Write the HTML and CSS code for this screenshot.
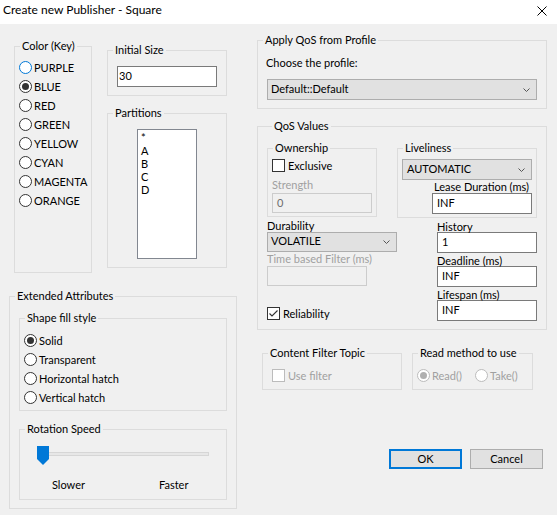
FILE: index.html
```html
<!DOCTYPE html>
<html>
<head>
<meta charset="utf-8">
<title>Create new Publisher - Square</title>
<link rel="stylesheet" href="styles.css">
</head>
<body>
<div class="window">
  <div class="titlebar">
    <span class="title">Create new Publisher - Square</span>
    <svg class="close" width="10" height="10" viewBox="0 0 10 10"><path d="M0.5 0.5 L9.5 9.5 M9.5 0.5 L0.5 9.5" stroke="#000" stroke-width="1" fill="none"/></svg>
  </div>
  <div class="client">
    <div class="col-left">
      <div class="left-top">
        <div class="group color-group">
          <div class="legend">Color (Key)</div>
          <div class="radio-list color-list">
            <div class="radio"><span class="rb focus"></span><span class="rt">PURPLE</span></div>
            <div class="radio"><span class="rb on"></span><span class="rt">BLUE</span></div>
            <div class="radio"><span class="rb"></span><span class="rt">RED</span></div>
            <div class="radio"><span class="rb"></span><span class="rt">GREEN</span></div>
            <div class="radio"><span class="rb"></span><span class="rt">YELLOW</span></div>
            <div class="radio"><span class="rb"></span><span class="rt">CYAN</span></div>
            <div class="radio"><span class="rb"></span><span class="rt">MAGENTA</span></div>
            <div class="radio"><span class="rb"></span><span class="rt">ORANGE</span></div>
          </div>
        </div>
        <div class="left-sub">
          <div class="group size-group">
            <div class="legend">Initial Size</div>
            <div class="textbox size-input">30</div>
          </div>
          <div class="group part-group">
            <div class="legend">Partitions</div>
            <div class="listbox">
              <div class="li">*</div>
              <div class="li">A</div>
              <div class="li">B</div>
              <div class="li">C</div>
              <div class="li">D</div>
            </div>
          </div>
        </div>
      </div>
      <div class="group ext-group">
        <div class="legend">Extended Attributes</div>
        <div class="group fill-group">
          <div class="legend">Shape fill style</div>
          <div class="radio-list fill-list">
            <div class="radio"><span class="rb on"></span><span class="rt">Solid</span></div>
            <div class="radio"><span class="rb"></span><span class="rt">Transparent</span></div>
            <div class="radio"><span class="rb"></span><span class="rt">Horizontal hatch</span></div>
            <div class="radio"><span class="rb"></span><span class="rt">Vertical hatch</span></div>
          </div>
        </div>
        <div class="group speed-group">
          <div class="legend">Rotation Speed</div>
          <div class="track">
            <svg class="thumb" width="12" height="19" viewBox="0 0 12 19"><path d="M0 0 H12 V13 L6 19 L0 13 Z" fill="#0078d7"/></svg>
          </div>
          <div class="speed-labels"><span class="slower">Slower</span><span>Faster</span></div>
        </div>
      </div>
    </div>

    <div class="col-right">
      <div class="group apply-group">
        <div class="legend">Apply QoS from Profile</div>
        <div class="lbl choose">Choose the profile:</div>
        <div class="combo profile-combo"><span>Default::Default</span><svg width="7" height="4" viewBox="0 0 7 4"><path d="M0.5 0.5 L3.5 3.5 L6.5 0.5" stroke="#555" fill="none"/></svg></div>
      </div>

      <div class="group qos-group">
        <div class="legend">QoS Values</div>
        <div class="qos-row1">
          <div class="group own-group">
            <div class="legend">Ownership</div>
            <div class="check excl"><span class="cb"></span><span class="ct">Exclusive</span></div>
            <div class="lbl dis strength-lbl">Strength</div>
            <div class="textbox dis strength-input">0</div>
          </div>
          <div class="group live-group">
            <div class="legend">Liveliness</div>
            <div class="combo live-combo"><span>AUTOMATIC</span><svg width="7" height="4" viewBox="0 0 7 4"><path d="M0.5 0.5 L3.5 3.5 L6.5 0.5" stroke="#555" fill="none"/></svg></div>
            <div class="lbl lease-lbl">Lease Duration (ms)</div>
            <div class="textbox lease-input">INF</div>
          </div>
        </div>
        <div class="qos-row2">
          <div class="qos-colA">
            <div class="lbl dur-lbl">Durability</div>
            <div class="combo dur-combo"><span>VOLATILE</span><svg width="7" height="4" viewBox="0 0 7 4"><path d="M0.5 0.5 L3.5 3.5 L6.5 0.5" stroke="#555" fill="none"/></svg></div>
            <div class="lbl dis tbf-lbl">Time based Filter (ms)</div>
            <div class="textbox dis tbf-input"></div>
            <div class="check rel"><span class="cb"><svg width="11" height="11" viewBox="0 0 11 11"><path d="M1.5 5.5 L4 8 L9.5 2.5" stroke="#333" stroke-width="1.1" fill="none"/></svg></span><span class="ct">Reliability</span></div>
          </div>
          <div class="qos-colB">
            <div class="lbl hist-lbl">History</div>
            <div class="textbox num-input">1</div>
            <div class="lbl dl-lbl">Deadline (ms)</div>
            <div class="textbox num-input">INF</div>
            <div class="lbl dl-lbl">Lifespan (ms)</div>
            <div class="textbox num-input">INF</div>
          </div>
        </div>
      </div>

      <div class="bottom-row">
        <div class="group cft-group">
          <div class="legend">Content Filter Topic</div>
          <div class="check usefilter"><span class="cb dis"></span><span class="ct dis">Use filter</span></div>
        </div>
        <div class="group read-group">
          <div class="legend">Read method to use</div>
          <div class="read-row">
            <div class="radio rd1"><span class="rb dis on"></span><span class="rt dis">Read()</span></div>
            <div class="radio"><span class="rb dis"></span><span class="rt dis">Take()</span></div>
          </div>
        </div>
      </div>

      <div class="buttons">
        <div class="btn ok">OK</div>
        <div class="btn cancel">Cancel</div>
      </div>
    </div>
  </div>
</div>
</body>
</html>
```

FILE: styles.css
```css
html, body {
  margin: 0;
  padding: 0;
}
body {
  background: #f0f0f0;
  font-family: "Lato", "Noto Sans", sans-serif;
  font-size: 11px;
  color: #000;
}
.window {
  width: 557px;
  height: 515px;
  overflow: hidden;
  background: #f0f0f0;
}
.titlebar {
  height: 24px;
  background: #fff;
  display: flex;
  align-items: flex-start;
  justify-content: space-between;
  padding: 0 10px 0 3px;
  box-sizing: border-box;
}
.title {
  font-size: 12px;
  line-height: 16px;
  padding-top: 2px;
}
.close {
  margin-top: 6px;
  display: block;
}
.client {
  display: flex;
  align-items: flex-start;
}

/* group boxes */
.group {
  border: 1px solid #dcdcdc;
  box-sizing: border-box;
}
.legend {
  width: fit-content;
  line-height: 16px;
  margin: -9px 0 -7px 5px;
  padding: 0 2px;
  background: #f0f0f0;
  white-space: nowrap;
}

/* radios / checks */
.radio {
  display: flex;
  align-items: center;
  height: 19px;
  line-height: 15px;
  white-space: nowrap;
}
.rb {
  width: 13px;
  height: 13px;
  box-sizing: border-box;
  border: 1px solid #333;
  border-radius: 50%;
  background: #fff;
  flex: none;
  position: relative;
}
.rb.on::after {
  content: "";
  position: absolute;
  left: 2px;
  top: 2px;
  width: 7px;
  height: 7px;
  border-radius: 50%;
  background: #333;
}
.rb.focus { border-color: #0078d7; }
.rb.dis { border-color: #bcbcbc; }
.rb.dis.on::after { background: #b0b0b0; }
.rt { margin-left: 2px; }
.dis { color: #a0a0a0; }

.check {
  display: flex;
  align-items: center;
  height: 13px;
  line-height: 15px;
  white-space: nowrap;
}
.cb {
  width: 13px;
  height: 13px;
  box-sizing: border-box;
  border: 1px solid #333;
  background: #fff;
  flex: none;
  display: flex;
  align-items: center;
  justify-content: center;
}
.cb svg { display: block; }
.cb.dis { border-color: #bcbcbc; }
.ct { margin-left: 3px; }

.lbl {
  line-height: 13px;
  white-space: nowrap;
}

/* text inputs */
.textbox {
  box-sizing: border-box;
  border: 1px solid #7a7a7a;
  background: #fff;
  height: 21px;
  line-height: 17px;
  padding-left: 4px;
  white-space: nowrap;
}
.textbox.dis {
  border-color: #cccccc;
  background: #f0f0f0;
  color: #6d6d6d;
  height: 20px;
}

/* combo boxes */
.combo {
  box-sizing: border-box;
  border: 1px solid #adadad;
  background: #e1e1e1;
  height: 21px;
  line-height: 17px;
  padding-left: 3px;
  display: flex;
  align-items: flex-start;
  white-space: nowrap;
}
.combo svg {
  margin-left: auto;
  margin-right: 6px;
  align-self: center;
  display: block;
}

/* left column */
.col-left {
  margin-left: 9px;
  width: 228px;
  flex: none;
}
.left-top {
  display: flex;
  align-items: flex-start;
  padding-left: 5px;
  margin-top: 22px;
}
.color-group {
  width: 78px;
  height: 227px;
  flex: none;
}
.color-list {
  padding: 11px 0 0 4px;
}
.left-sub {
  margin-left: 15px;
  width: 120px;
  flex: none;
}
.size-group {
  margin-top: 4px;
  height: 46px;
}
.size-input {
  margin: 15px 0 0 9px;
  width: 100px;
  padding-left: 1px;
}
.part-group {
  margin-top: 17px;
  height: 155px;
}
.listbox {
  margin: 15px 0 0 29px;
  width: 60px;
  height: 130px;
  box-sizing: border-box;
  border: 1px solid #828790;
  background: #fff;
  padding: 1px 0 0 3px;
}
.li {
  line-height: 13px;
}
.ext-group {
  margin-top: 23px;
  width: 228px;
  height: 213px;
}
.fill-group {
  margin: 21px 0 0 9px;
  width: 208px;
  height: 93px;
}
.fill-list {
  padding: 12px 0 0 4px;
}
.speed-group {
  margin: 18px 0 0 9px;
  width: 208px;
  height: 71px;
}
.track {
  position: relative;
  margin: 22px 0 0 18px;
  width: 171px;
  height: 4px;
  box-sizing: border-box;
  border: 1px solid #d6d6d6;
  background: #e7e7e7;
}
.thumb {
  position: absolute;
  left: -2px;
  top: -7px;
  display: block;
}
.speed-labels {
  display: flex;
  margin-top: 21px;
  line-height: 15px;
}
.slower {
  margin-left: 32px;
  width: 107px;
}

/* right column */
.col-right {
  margin-left: 20px;
  width: 290px;
  flex: none;
}
.apply-group {
  margin-top: 16px;
  height: 69px;
}
.choose {
  margin: 14px 0 0 8px;
  line-height: 15px;
}
.profile-combo {
  margin: 9px 0 0 9px;
  width: 270px;
}
.qos-group {
  margin-top: 17px;
  height: 204px;
  padding-left: 9px;
}
.qos-row1 {
  display: flex;
  align-items: flex-start;
  margin-top: 21px;
}
.own-group {
  width: 110px;
  height: 69px;
  flex: none;
}
.excl {
  margin: 10px 0 0 4px;
}
.strength-lbl {
  margin: 6px 0 0 4px;
}
.strength-input {
  margin: 2px 0 0 4px;
  width: 100px;
}
.live-group {
  margin-left: 20px;
  width: 140px;
  height: 70px;
  flex: none;
}
.live-combo {
  margin: 10px 0 0 4px;
  width: 130px;
  padding-left: 4px;
}
.lease-lbl {
  margin: 0 0 0 36px;
}
.lease-input {
  margin: 0 0 0 34px;
  width: 100px;
}
.qos-row2 {
  display: flex;
  align-items: flex-start;
}
.qos-colA {
  width: 130px;
  flex: none;
}
.dur-lbl {
  margin-top: 1px;
}
.dur-combo {
  width: 130px;
  height: 20px;
  line-height: 16px;
}
.tbf-input {
  margin-top: 1px;
  width: 100px;
}
.rel {
  margin-top: 21px;
}
.qos-colB {
  margin-left: 40px;
  width: 100px;
  flex: none;
}
.hist-lbl {
  margin-top: 2px;
}
.num-input {
  margin-top: -1px;
  width: 100px;
}
.dl-lbl {
  margin-top: 1px;
}

.bottom-row {
  display: flex;
  align-items: flex-start;
  margin: 23px 0 0 5px;
}
.cft-group {
  width: 140px;
  height: 37px;
  flex: none;
}
.usefilter {
  margin: 15px 0 0 9px;
}
.read-group {
  margin-left: 10px;
  width: 121px;
  height: 37px;
  flex: none;
}
.read-row {
  display: flex;
  margin: 12px 0 0 4px;
}
.rd1 {
  width: 58px;
}

.buttons {
  display: flex;
  margin: 59px 0 0 132px;
}
.btn {
  width: 73px;
  height: 20px;
  box-sizing: border-box;
  background: #e1e1e1;
  display: flex;
  align-items: center;
  justify-content: center;
  line-height: 15px;
  padding-bottom: 1px;
}
.btn.ok {
  border: 2px solid #0078d7;
}
.btn.cancel {
  margin-left: 8px;
  border: 1px solid #adadad;
}
```
